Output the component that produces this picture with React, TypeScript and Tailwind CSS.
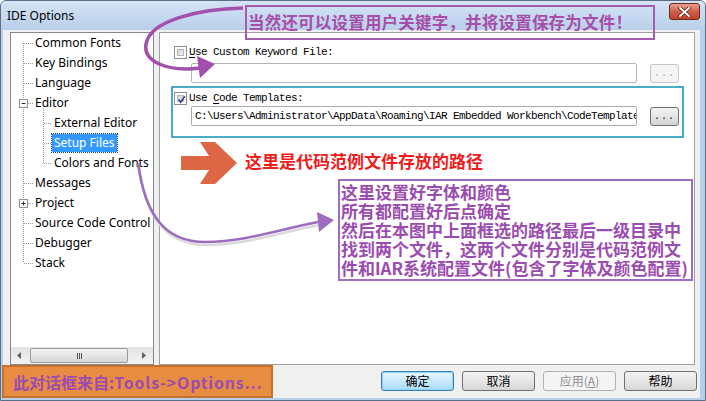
import React from "react";

const MONO = { fontFamily: '"Liberation Mono", "DejaVu Sans Mono", monospace' } as const;
const UI = { fontFamily: '"Noto Sans", "Noto Sans CJK SC", sans-serif' } as const;
const CJK = { fontFamily: '"Noto Sans CJK SC", "Noto Sans", sans-serif' } as const;

function Checkbox({ checked }: { checked?: boolean }) {
  return (
    <div className="w-[13px] h-[13px] shrink-0 border border-[#8e8f8f] bg-white p-[2px]">
      <div className="w-full h-full bg-gradient-to-br from-[#cbcfd5] to-[#f6f6f6] border border-[#b3b8be] relative">
        {checked && (
          <svg viewBox="0 0 9 9" className="absolute -left-[1px] -top-[1px] w-[9px] h-[9px]">
            <path d="M1.5 4.5 L3.7 7 L7.8 1.2" fill="none" stroke="#3a4a8c" strokeWidth="1.8" />
          </svg>
        )}
      </div>
    </div>
  );
}

function DotsButton({ disabled }: { disabled?: boolean }) {
  return (
    <div
      className={
        "w-[29px] h-[19px] shrink-0 rounded-[3px] border flex items-center justify-center text-[10px] tracking-[1px] " +
        (disabled
          ? "border-[#c4c6c8] bg-[#f4f4f4] text-[#a0a0a0]"
          : "border-[#707070] bg-gradient-to-b from-[#f3f3f3] via-[#e6e6e6] to-[#d3d3d3] text-[#111]")
      }
      style={MONO}
    >
      ...
    </div>
  );
}

type Row = { label: string; child?: boolean; selected?: boolean };
const rows: Row[] = [
  { label: "Common Fonts" },
  { label: "Key Bindings" },
  { label: "Language" },
  { label: "Editor" },
  { label: "External Editor", child: true },
  { label: "Setup Files", child: true, selected: true },
  { label: "Colors and Fonts", child: true },
  { label: "Messages" },
  { label: "Project" },
  { label: "Source Code Control" },
  { label: "Debugger" },
  { label: "Stack" },
];

function TreeLines() {
  const dash = { stroke: "#9a9a9a", strokeWidth: 1, strokeDasharray: "1 1" };
  const roots = [0, 1, 2, 3, 7, 8, 9, 10, 11];
  return (
    <svg className="absolute left-0 top-0 pointer-events-none" width="142" height="260">
      <line x1="12.5" y1="10" x2="12.5" y2="230" {...dash} />
      <line x1="32.5" y1="75" x2="32.5" y2="130" {...dash} />
      {roots.map((i) => (
        <line key={i} x1="13" y1={i * 20 + 10.5} x2="22" y2={i * 20 + 10.5} {...dash} />
      ))}
      {[4, 5, 6].map((i) => (
        <line key={i} x1="33" y1={i * 20 + 10.5} x2="41" y2={i * 20 + 10.5} {...dash} />
      ))}
      {[3, 8].map((i) => (
        <g key={i}>
          <rect x="8.5" y={i * 20 + 6.5} width="8" height="8" fill="#fafafa" stroke="#919191" />
          <line x1="10.5" y1={i * 20 + 10.5} x2="14.5" y2={i * 20 + 10.5} stroke="#333" />
          {i === 8 && <line x1="12.5" y1={i * 20 + 8.5} x2="12.5" y2={i * 20 + 12.5} stroke="#333" />}
        </g>
      ))}
    </svg>
  );
}

function Tree() {
  return (
    <div className="w-[144px] h-[333px] border border-[#828790] bg-white flex flex-col shrink-0">
      <div className="relative flex-1 overflow-hidden" style={UI}>
        <TreeLines />
        {rows.map((r) => (
          <div
            key={r.label}
            className={"h-[20px] flex items-center whitespace-nowrap " + (r.child ? "pl-[41px]" : "pl-[22px]")}
          >
            <span
              className={
                "px-[2px] leading-[18px] text-[12px] " +
                (r.selected ? "bg-[#3399ff] text-white outline-1 outline-dotted outline-[#1a3a80]" : "text-black")
              }
            >
              {r.label}
            </span>
          </div>
        ))}
      </div>
      <div className="h-[17px] flex items-center bg-gradient-to-b from-[#e3e3e3] to-[#f2f2f2] shrink-0">
        <div className="w-[17px] h-[17px] flex items-center justify-center">
          <svg width="5" height="7" viewBox="0 0 5 7">
            <path d="M4 0 L0 3.5 L4 7 Z" fill="#606060" />
          </svg>
        </div>
        <div className="ml-[2px] w-[98px] h-[15px] rounded-[2px] border border-[#9a9a9a] bg-gradient-to-b from-[#f5f5f5] to-[#d6d6d6] flex items-center justify-center gap-[1px]">
          <div className="w-[1px] h-[6px] bg-[#555]" />
          <div className="w-[1px] h-[6px] bg-[#555]" />
          <div className="w-[1px] h-[6px] bg-[#555]" />
        </div>
        <div className="flex-1" />
        <div className="w-[17px] h-[17px] flex items-center justify-center">
          <svg width="5" height="7" viewBox="0 0 5 7">
            <path d="M0 0 L4 3.5 L0 7 Z" fill="#606060" />
          </svg>
        </div>
      </div>
    </div>
  );
}

const monoCls = "text-[11px] tracking-[-0.6px] text-black leading-none";

function RightPanel() {
  return (
    <div className="w-[536px] h-[333px] border border-[#a0a0a0] bg-white shrink-0 flex flex-col pt-[13px] pl-[14px]">
      <div className="flex items-center gap-[2px] h-[13px]">
        <Checkbox />
        <span className={monoCls} style={MONO}>
          <span className="underline underline-offset-2">U</span>se Custom Keyword File:
        </span>
      </div>
      <div className="flex items-start mt-[4px] ml-[17px]">
        <div className="w-[446px] h-[20px] border border-[#b5b5b5] rounded-[2px] bg-white" />
        <div className="ml-[13px] mt-[1px]">
          <DotsButton disabled />
        </div>
      </div>
      <div className="mt-[3px] -ml-[3px] w-[513px] h-[52px] border-2 border-[#4bacc6] pl-[1px] pt-[4px] flex flex-col">
        <div className="flex items-center gap-[2px] h-[13px]">
          <Checkbox checked />
          <span className={monoCls} style={MONO}>
            Use <span className="underline underline-offset-2">C</span>ode Templates:
          </span>
        </div>
        <div className="flex items-start mt-[1px] ml-[17px]">
          <div className="w-[446px] h-[20px] border border-[#ababab] rounded-[2px] bg-white overflow-hidden whitespace-nowrap flex items-center pl-[3px]">
            <span className={monoCls} style={MONO}>
              C:\Users\Administrator\AppData\Roaming\IAR Embedded Workbench\CodeTemplates
            </span>
          </div>
          <div className="ml-[13px] mt-[1px]">
            <DotsButton />
          </div>
        </div>
      </div>
    </div>
  );
}

function WinButton({ children, kind }: { children: React.ReactNode; kind?: "default" | "disabled" }) {
  const cls =
    kind === "default"
      ? "border-[#3c7fb1] bg-gradient-to-b from-[#e9f6fd] via-[#c8e9fa] to-[#a9daf5] text-black shadow-[inset_0_0_0_1px_#8fd3f6]"
      : kind === "disabled"
      ? "border-[#adb2b5] bg-[#f4f4f4] text-[#8d8d8d]"
      : "border-[#707070] bg-gradient-to-b from-[#f2f2f2] via-[#e6e6e6] to-[#d5d5d5] text-black";
  return (
    <div
      className={"w-[73px] h-[20px] rounded-[3px] border flex items-center justify-center text-[12px] leading-none " + cls}
      style={CJK}
    >
      {children}
    </div>
  );
}

function Annotations() {
  return (
    <>
      {/* top note */}
      <div
        className="absolute left-[245px] top-[5px] w-[410px] h-[35px] border-2 border-[#a45dae] flex items-center pl-[1px] text-[16.5px] tracking-[0.2px] text-[#a64ea9] font-bold whitespace-nowrap"
        style={CJK}
      >
        当然还可以设置用户关键字，并将设置保存为文件！
      </div>
      {/* red text */}
      <div
        className="absolute left-[245px] top-[150px] text-[17px] text-[#f01c1c] font-bold whitespace-nowrap leading-[22px]"
        style={CJK}
      >
        这里是代码范例文件存放的路径
      </div>
      {/* purple note */}
      <div
        className="absolute left-[338px] top-[179px] w-[355px] h-[102px] border-2 border-[#9f6cbf] pl-[1px] pt-[1px] text-[17px] leading-[19px] text-[#9b4cb0] font-bold whitespace-nowrap"
        style={CJK}
      >
        <div>这里设置好字体和颜色</div>
        <div>所有都配置好后点确定</div>
        <div>然后在本图中上面框选的路径最后一级目录中</div>
        <div>找到两个文件，这两个文件分别是代码范例文</div>
        <div>件和IAR系统配置文件(包含了字体及颜色配置)</div>
      </div>
      {/* orange note */}
      <div
        className="absolute left-[2px] top-[365px] w-[271px] h-[33px] border-2 border-[#c4712f] bg-[#e88c42] flex items-center pl-[9px] text-[16px] text-[#9c4cb0] font-bold whitespace-nowrap"
        style={CJK}
      >
        此对话框来自:<span className="tracking-[0.8px]">Tools-&gt;Options...</span>
      </div>
      <svg className="absolute left-0 top-0 pointer-events-none" width="706" height="401">
        {/* red block arrow */}
        <polygon
          points="181,156 209,156 200,142 215,142 237,163 215,184 200,184 209,170 181,170"
          fill="#dd6645"
        />
        {/* top curved arrow */}
        <path
          d="M 243 8 C 200 9, 150 20, 146 44 C 143 62, 168 72, 200 68"
          fill="none"
          stroke="#a34fad"
          strokeWidth="3.5"
        />
        <polygon points="215,64 197,56 200,78" fill="#a34fad" />
        {/* bottom curved arrow shadow */}
        <path
          d="M 139 166 C 146 218, 166 245, 206 245 C 246 245, 286 231, 319 225"
          fill="none"
          stroke="#dadada"
          strokeWidth="2.5"
        />
        <path
          d="M 138 163 C 145 215, 165 242, 205 242 C 245 242, 285 228, 318 222"
          fill="none"
          stroke="#9b6cc0"
          strokeWidth="2.5"
        />
        <polygon points="334,220 317,212 319,232" fill="#9b6cc0" />
      </svg>
    </>
  );
}

export default function App() {
  return (
    <div className="w-[706px] h-[401px] relative overflow-hidden bg-white">
      <div className="w-full h-full flex flex-col rounded-t-[6px] border border-[#5b6e87] bg-[#b8cfe9] overflow-hidden">
        {/* title bar */}
        <div className="h-[29px] shrink-0 flex items-center bg-gradient-to-b from-[#d5e4f5] to-[#b9cfea] pl-[6px] pr-[5px]">
          <span className="text-[12px] text-black" style={UI}>
            IDE Options
          </span>
          <div className="flex-1" />
          <div className="w-[31px] h-[17px] -mt-[8px] rounded-[3px] border border-[#6b2a20] bg-gradient-to-b from-[#e8a093] via-[#d0604a] to-[#c2412a] flex items-center justify-center">
            <svg width="13" height="10" viewBox="0 0 13 10">
              <path d="M2 1 L11 9 M11 1 L2 9" stroke="#5a2a22" strokeWidth="3.4" strokeLinecap="square" />
              <path d="M2 1 L11 9 M11 1 L2 9" stroke="#ffffff" strokeWidth="1.8" strokeLinecap="square" />
            </svg>
          </div>
        </div>
        {/* client */}
        <div className="flex-1 ml-[2px] mr-[5px] mb-[2px] bg-[#f0f0f0] flex flex-col">
          <div className="flex gap-[5px] pt-[2px] pl-[7px]">
            <Tree />
            <RightPanel />
          </div>
          <div className="flex justify-end gap-[8px] pr-[3px] mt-[6px]">
            <WinButton kind="default">确定</WinButton>
            <WinButton>取消</WinButton>
            <WinButton kind="disabled">
              应用(<span className="underline">A</span>)
            </WinButton>
            <WinButton>帮助</WinButton>
          </div>
        </div>
      </div>
      <Annotations />
    </div>
  );
}
